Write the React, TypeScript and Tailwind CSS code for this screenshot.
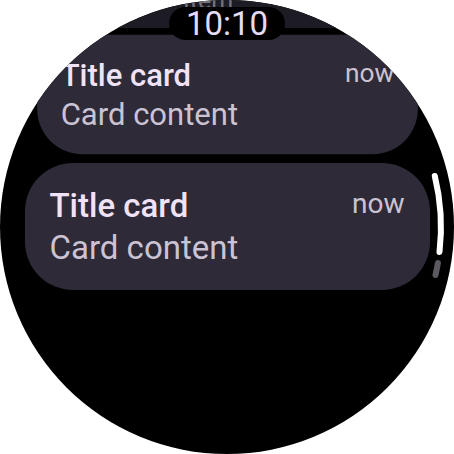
import React from "react";

type CardProps = {
  title: string;
  content: string;
  time: string;
  className?: string;
};

const TitleCard = ({ title, content, time, className = "" }: CardProps) => {
  return (
    <div
      className={`w-[405px] h-[127px] shrink-0 rounded-[48px] bg-[#2e2a37] px-[25px] pt-[22px] ${className}`}
    >
      <div className="flex items-start justify-between">
        <span className="text-[33px] leading-[42px] font-medium text-[#f0e3f8]">{title}</span>
        <span className="text-[28px] leading-[38px] text-[#cbc3d3]">{time}</span>
      </div>
      <div className="text-[33px] leading-[42px] text-[#cbc3d3]">{content}</div>
    </div>
  );
};

const ScrollIndicator = () => (
  <svg className="absolute inset-0 pointer-events-none" width="454" height="454" viewBox="0 0 454 454">
    {/* thumb */}
    <path d="M434.8 176 A214 214 0 0 1 439.5 252" fill="none" stroke="#ffffff" strokeWidth="6" strokeLinecap="round" />
    {/* rest of track */}
    <path d="M437.9 263 A214 214 0 0 1 435.5 275" fill="none" stroke="#5c5a60" strokeWidth="6" strokeLinecap="round" />
  </svg>
);

const App = () => {
  return (
    <div className="w-[454px] h-[454px] bg-white" style={{ fontFamily: "Roboto, 'Noto Sans', sans-serif" }}>
      <div className="relative w-full h-full rounded-full bg-black overflow-hidden">
        <div className="flex flex-col items-center">
          <div className="w-full h-[28px] shrink-0 bg-[#1d1b23] flex justify-center overflow-hidden">
            <span className="-mt-[13px] mr-[38px] text-[25px] leading-[28px] text-[#77737d]">Item</span>
          </div>
          <TitleCard className="mt-[3px] scale-[0.94]" title="Title card" content="Card content" time="now" />
          <TitleCard className="mt-[5px]" title="Title card" content="Card content" time="now" />
        </div>

        <div className="absolute top-[7px] left-1/2 -translate-x-1/2 w-[116px] h-[33px] rounded-full bg-black flex items-center justify-center">
          <span className="text-[33px] leading-none text-[#e4dbf6]">10:10</span>
        </div>

        <ScrollIndicator />
      </div>
    </div>
  );
};

export default App;
